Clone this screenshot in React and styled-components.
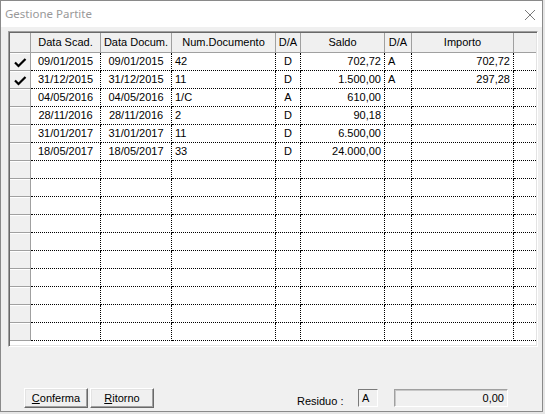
import styled, { createGlobalStyle } from "styled-components";

const GlobalStyle = createGlobalStyle`
    html, body {
        margin: 0;
        padding: 0;
        background: #e6e6e6;
    }
    * {
        box-sizing: border-box;
    }
`

const columns = [
    {key: 'scad', title: 'Data Scad.', width: 70, align: 'center'},
    {key: 'docum', title: 'Data Docum.', width: 71, align: 'center'},
    {key: 'num', title: 'Num.Documento', width: 104, align: 'left'},
    {key: 'da', title: 'D/A', width: 25, align: 'center'},
    {key: 'saldo', title: 'Saldo', width: 84, align: 'right'},
    {key: 'da2', title: 'D/A', width: 27, align: 'left'},
    {key: 'importo', title: 'Importo', width: 102, align: 'right'},
    {key: 'extra', title: '', width: 22, align: 'left', last: true},
]

const data = [
    {checked: true, scad: '09/01/2015', docum: '09/01/2015', num: '42', da: 'D', saldo: '702,72', da2: 'A', importo: '702,72'},
    {checked: true, scad: '31/12/2015', docum: '31/12/2015', num: '11', da: 'D', saldo: '1.500,00', da2: 'A', importo: '297,28'},
    {scad: '04/05/2016', docum: '04/05/2016', num: '1/C', da: 'A', saldo: '610,00'},
    {scad: '28/11/2016', docum: '28/11/2016', num: '2', da: 'D', saldo: '90,18'},
    {scad: '31/01/2017', docum: '31/01/2017', num: '11', da: 'D', saldo: '6.500,00'},
    {scad: '18/05/2017', docum: '18/05/2017', num: '33', da: 'D', saldo: '24.000,00'},
]

const TOTAL_ROWS = 16

function CheckMark() {
    return (
        <svg width="20" height="17" viewBox="0 0 20 17">
            <polyline points="5,9.5 8.5,13 15.5,6" fill="none" stroke="#000" strokeWidth="2.2"/>
        </svg>
    )
}

function App() {
    const rows = [...data]
    while (rows.length < TOTAL_ROWS) rows.push({})

    return (
        <>
            <GlobalStyle/>
            <Window>
                <TitleBar>
                    <Title>Gestione Partite</Title>
                    <CloseBox>
                        <svg width="12" height="12" viewBox="0 0 12 12">
                            <path d="M1 1 L11 11 M11 1 L1 11" stroke="#7a7a7a" strokeWidth="1" fill="none"/>
                        </svg>
                    </CloseBox>
                </TitleBar>
                <Body>
                    <Grid>
                        <HeaderRow>
                            <IndicatorHead/>
                            {columns.map((c, i) => (
                                <HeaderCell key={i} $w={c.width} $last={c.last}>{c.title}</HeaderCell>
                            ))}
                        </HeaderRow>
                        {rows.map((r, i) => (
                            <Row key={i}>
                                <Indicator>{r.checked ? <CheckMark/> : null}</Indicator>
                                {columns.map((c) => (
                                    <Cell key={c.key} $w={c.width} $align={c.align} $last={c.last}>
                                        {r[c.key]}
                                    </Cell>
                                ))}
                            </Row>
                        ))}
                    </Grid>
                    <Footer>
                        <Button><u>C</u>onferma</Button>
                        <Button><u>R</u>itorno</Button>
                        <ResiduoLabel>Residuo :</ResiduoLabel>
                        <SignBox>A</SignBox>
                        <ValueBox>0,00</ValueBox>
                    </Footer>
                </Body>
            </Window>
        </>
    );
}

export default App;

const Window = styled.div`
    width: 543px;
    height: 412px;
    border: 1px solid #8a8a8a;
    background: #f0f0f0;
    display: flex;
    flex-direction: column;
    font-family: "Liberation Sans", Arial, sans-serif;
    font-size: 11px;
    color: #000;
`

const TitleBar = styled.div`
    height: 26px;
    background: #fff;
    display: flex;
    align-items: center;
    justify-content: space-between;
    padding-left: 4px;
    padding-right: 6px;
`

const Title = styled.div`
    font-family: "Noto Sans", "Open Sans", sans-serif;
    font-size: 11.5px;
    color: #999;
    padding-bottom: 1px;
`

const CloseBox = styled.div`
    display: flex;
    align-items: center;
    padding-top: 1px;
`

const Body = styled.div`
    padding: 4px 7px 0 7px;
    display: flex;
    flex-direction: column;
`

const Grid = styled.div`
    width: 530px;
    height: 316px;
    background: #fff;
    border: 1px solid;
    border-color: #a0a0a0 #fff #fff #a0a0a0;
    box-shadow: inset 1px 1px 0 #696969, inset -1px -1px 0 #e3e3e3;
    padding: 1px;
    overflow: hidden;
    display: flex;
    flex-direction: column;
`

const HeaderRow = styled.div`
    display: flex;
    height: 20px;
    flex-shrink: 0;
`

const IndicatorHead = styled.div`
    width: 21px;
    flex-shrink: 0;
    background: #f0f0f0;
    border-right: 1px solid #a0a0a0;
    border-bottom: 1px solid #a0a0a0;
`

const HeaderCell = styled.div`
    width: ${({$w}) => $w}px;
    flex-shrink: 0;
    background: #f0f0f0;
    border-right: ${({$last}) => $last ? 'none' : '1px solid #a0a0a0'};
    border-bottom: 1px solid #a0a0a0;
    display: flex;
    align-items: center;
    justify-content: center;
    white-space: nowrap;
    padding-bottom: 1px;
`

const Row = styled.div`
    display: flex;
    height: 18px;
    flex-shrink: 0;
`

const Indicator = styled.div`
    width: 21px;
    flex-shrink: 0;
    background: #f0f0f0;
    border-right: 1px solid #a0a0a0;
    border-bottom: 1px solid #a0a0a0;
    box-shadow: inset 0 1px 0 #fff;
    display: flex;
    align-items: center;
`

const Cell = styled.div`
    width: ${({$w}) => $w}px;
    flex-shrink: 0;
    border-right: ${({$last}) => $last ? 'none' : '1px dotted #000'};
    border-bottom: 1px dotted #000;
    display: flex;
    align-items: center;
    justify-content: ${({$align}) => $align === 'right' ? 'flex-end' : $align === 'center' ? 'center' : 'flex-start'};
    padding: 0 3px 1px 3px;
    white-space: nowrap;
    overflow: hidden;
`

const Footer = styled.div`
    display: flex;
    align-items: center;
    height: 20px;
    margin-top: 41px;
    padding-left: 16px;
`

const Button = styled.div`
    width: 64px;
    height: 20px;
    margin-right: 2px;
    background: #f0f0f0;
    border: 1px solid;
    border-color: #fff #696969 #696969 #fff;
    box-shadow: inset -1px -1px 0 #a0a0a0, inset 1px 1px 0 #e3e3e3;
    display: flex;
    align-items: center;
    justify-content: center;
    padding-bottom: 1px;
    u {
        text-decoration: underline;
    }
`

const ResiduoLabel = styled.div`
    margin-left: 141px;
    padding-top: 5px;
    width: 61px;
`

const SignBox = styled.div`
    width: 20px;
    height: 18px;
    border: 1px solid;
    border-color: #7a7a7a #fff #fff #7a7a7a;
    display: flex;
    align-items: center;
    padding-left: 3px;
    padding-bottom: 1px;
`

const ValueBox = styled.div`
    width: 114px;
    height: 18px;
    margin-left: 16px;
    border: 1px solid;
    border-color: #a0a0a0 #fff #fff #a0a0a0;
    box-shadow: inset 1px 1px 0 #c8c8c8;
    display: flex;
    align-items: center;
    justify-content: flex-end;
    padding-right: 3px;
    padding-bottom: 1px;
`
